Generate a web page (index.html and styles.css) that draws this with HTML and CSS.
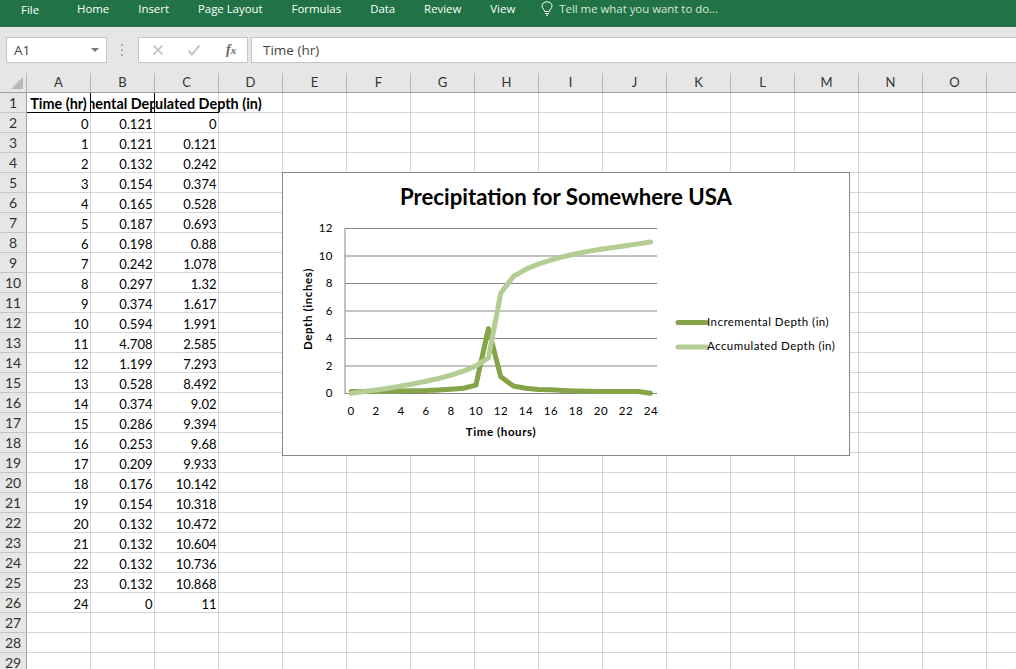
FILE: index.html
```html
<!DOCTYPE html>
<html lang="en">
<head>
    <meta charset="UTF-8">
    <title>Precipitation - Excel</title>
    <link rel="stylesheet" href="styles.css">
</head>
<body>
    <div class="ribbon">
        <span class="tab tab-file">File</span>
        <span class="tab">Home</span>
        <span class="tab">Insert</span>
        <span class="tab">Page Layout</span>
        <span class="tab">Formulas</span>
        <span class="tab">Data</span>
        <span class="tab">Review</span>
        <span class="tab">View</span>
        <span class="tell">
            <svg width="12" height="15" viewBox="0 0 12 15" fill="none" stroke="#fff" stroke-width="1">
                <path d="M3.7 10.5C3.5 8.5 1 7.5 1 4.8 1 2.5 3.2.8 6 .8s5 1.7 5 4c0 2.7-2.5 3.7-2.7 5.7z"/>
                <path d="M4 12.5h4M5 14.3h2"/>
            </svg>
            Tell me what you want to do...
        </span>
    </div>

    <div class="toolbar">
        <div class="namebox">A1<span class="caret"></span></div>
        <div class="grip"></div>
        <div class="fxbox">
            <svg width="12" height="12" viewBox="0 0 12 12" fill="none" stroke="#bdbdbd" stroke-width="1.6"><path d="M1.5 1.5l9 9M10.5 1.5l-9 9"/></svg>
            <svg width="14" height="12" viewBox="0 0 14 12" fill="none" stroke="#bdbdbd" stroke-width="1.8"><path d="M1.5 6.5l3.5 4 7.5-9"/></svg>
            <span class="fx">f<span class="fx-x">x</span></span>
        </div>
        <div class="formula">Time (hr)</div>
    </div>

    <div class="col-heads">
        <div class="corner"><span class="corner-mark"></span></div>
        <div class="ch">A</div><div class="ch">B</div><div class="ch">C</div><div class="ch">D</div>
        <div class="ch">E</div><div class="ch">F</div><div class="ch">G</div><div class="ch">H</div>
        <div class="ch">I</div><div class="ch">J</div><div class="ch">K</div><div class="ch">L</div>
        <div class="ch">M</div><div class="ch">N</div><div class="ch">O</div><div class="ch"></div>
    </div>

    <div class="sheet">
        <div class="row">
            <div class="rh">1</div>
            <div class="cell head edge"><span>Time (hr)</span></div>
            <div class="cell head edge"><span>Incremental Depth (in)</span></div>
            <div class="cell head spill"><span>Accumulated Depth (in)</span></div>
        </div>
        <div class="row"><div class="rh">2</div><div class="cell">0</div><div class="cell">0.121</div><div class="cell">0</div></div>
        <div class="row"><div class="rh">3</div><div class="cell">1</div><div class="cell">0.121</div><div class="cell">0.121</div></div>
        <div class="row"><div class="rh">4</div><div class="cell">2</div><div class="cell">0.132</div><div class="cell">0.242</div></div>
        <div class="row"><div class="rh">5</div><div class="cell">3</div><div class="cell">0.154</div><div class="cell">0.374</div></div>
        <div class="row"><div class="rh">6</div><div class="cell">4</div><div class="cell">0.165</div><div class="cell">0.528</div></div>
        <div class="row"><div class="rh">7</div><div class="cell">5</div><div class="cell">0.187</div><div class="cell">0.693</div></div>
        <div class="row"><div class="rh">8</div><div class="cell">6</div><div class="cell">0.198</div><div class="cell">0.88</div></div>
        <div class="row"><div class="rh">9</div><div class="cell">7</div><div class="cell">0.242</div><div class="cell">1.078</div></div>
        <div class="row"><div class="rh">10</div><div class="cell">8</div><div class="cell">0.297</div><div class="cell">1.32</div></div>
        <div class="row"><div class="rh">11</div><div class="cell">9</div><div class="cell">0.374</div><div class="cell">1.617</div></div>
        <div class="row"><div class="rh">12</div><div class="cell">10</div><div class="cell">0.594</div><div class="cell">1.991</div></div>
        <div class="row"><div class="rh">13</div><div class="cell">11</div><div class="cell">4.708</div><div class="cell">2.585</div></div>
        <div class="row"><div class="rh">14</div><div class="cell">12</div><div class="cell">1.199</div><div class="cell">7.293</div></div>
        <div class="row"><div class="rh">15</div><div class="cell">13</div><div class="cell">0.528</div><div class="cell">8.492</div></div>
        <div class="row"><div class="rh">16</div><div class="cell">14</div><div class="cell">0.374</div><div class="cell">9.02</div></div>
        <div class="row"><div class="rh">17</div><div class="cell">15</div><div class="cell">0.286</div><div class="cell">9.394</div></div>
        <div class="row"><div class="rh">18</div><div class="cell">16</div><div class="cell">0.253</div><div class="cell">9.68</div></div>
        <div class="row"><div class="rh">19</div><div class="cell">17</div><div class="cell">0.209</div><div class="cell">9.933</div></div>
        <div class="row"><div class="rh">20</div><div class="cell">18</div><div class="cell">0.176</div><div class="cell">10.142</div></div>
        <div class="row"><div class="rh">21</div><div class="cell">19</div><div class="cell">0.154</div><div class="cell">10.318</div></div>
        <div class="row"><div class="rh">22</div><div class="cell">20</div><div class="cell">0.132</div><div class="cell">10.472</div></div>
        <div class="row"><div class="rh">23</div><div class="cell">21</div><div class="cell">0.132</div><div class="cell">10.604</div></div>
        <div class="row"><div class="rh">24</div><div class="cell">22</div><div class="cell">0.132</div><div class="cell">10.736</div></div>
        <div class="row"><div class="rh">25</div><div class="cell">23</div><div class="cell">0.132</div><div class="cell">10.868</div></div>
        <div class="row"><div class="rh">26</div><div class="cell">24</div><div class="cell">0</div><div class="cell">11</div></div>
        <div class="row"><div class="rh">27</div></div>
        <div class="row"><div class="rh">28</div></div>
        <div class="row"><div class="rh">29</div></div>

        <!-- chart floats over the cells -->
        <div class="chart">
            <svg class="chart-svg" width="566" height="282" viewBox="0 0 566 282">
                <text class="chart-title" x="283" y="32">Precipitation for Somewhere USA</text>

                <g class="gridlines">
                    <path d="M62 55.5H374M62 83H374M62 110.5H374M62 138H374M62 165.5H374M62 193H374M62 220.5H374M62 55V221"/>
                </g>

                <g class="ytick">
                    <text x="50" y="59">12</text>
                    <text x="50" y="87">10</text>
                    <text x="50" y="114">8</text>
                    <text x="50" y="142">6</text>
                    <text x="50" y="169">4</text>
                    <text x="50" y="197">2</text>
                    <text x="50" y="224">0</text>
                </g>
                <g class="xtick">
                    <text x="68" y="242">0</text>
                    <text x="93" y="242">2</text>
                    <text x="118" y="242">4</text>
                    <text x="143" y="242">6</text>
                    <text x="168" y="242">8</text>
                    <text x="193" y="242">10</text>
                    <text x="218" y="242">12</text>
                    <text x="243" y="242">14</text>
                    <text x="268" y="242">16</text>
                    <text x="293" y="242">18</text>
                    <text x="318" y="242">20</text>
                    <text x="343" y="242">22</text>
                    <text x="368" y="242">24</text>
                </g>

                <text class="axis-title" x="218" y="263">Time (hours)</text>
                <text class="axis-title" transform="translate(29 136) rotate(-90)">Depth (inches)</text>

                <polyline class="series series-inc" points="68.2,218.6 80.7,218.6 93.1,218.5 105.6,218.2 118.1,218 130.6,217.7 143,217.6 155.5,217 168,216.2 180.4,215.2 192.9,212.1 205.4,155.6 217.8,203.8 230.3,213 242.8,215.2 255.3,216.4 267.7,216.8 280.2,217.4 292.7,217.9 305.1,218.2 317.6,218.5 330.1,218.5 342.5,218.5 355,218.5 367.5,220.3"/>
                <polyline class="series series-acc" points="68.2,220.3 80.7,218.6 93.1,217 105.6,215.2 118.1,213 130.6,210.8 143,208.2 155.5,205.5 168,202.1 180.4,198.1 192.9,192.9 205.4,184.8 217.8,120 230.3,103.5 242.8,96.3 255.3,91.1 267.7,87.2 280.2,83.7 292.7,80.8 305.1,78.4 317.6,76.3 330.1,74.5 342.5,72.7 355,70.9 367.5,69"/>

                <line class="series series-inc" x1="395" y1="149.5" x2="423" y2="149.5"/>
                <line class="series series-acc" x1="395" y1="174" x2="423" y2="174"/>
                <text class="legend" x="424" y="153">Incremental Depth (in)</text>
                <text class="legend" x="424" y="177">Accumulated Depth (in)</text>
            </svg>
        </div>
    </div>
</body>
</html>
```

FILE: styles.css
```css
* { box-sizing: border-box; }
html, body { margin: 0; height: 669px; overflow: hidden; }
body { font-family: "Lato", "Liberation Sans", sans-serif; font-size: 13px; background: #fff; color: #000; }

.ribbon { display: flex; height: 27px; padding: 0 0 11px 21px; gap: 29px; align-items: center; background: #217346; color: #fff; font-family: "Open Sans", sans-serif; font-size: 11.4px; }
.tab-file { margin-right: 9px; padding-top: 2px; }
.tell { display: flex; align-items: center; gap: 6px; margin-left: -3px; color: #d8e6dd; }

.toolbar { display: flex; height: 46px; padding: 10px 0 0 6px; background: #e6e6e6; font-family: "Open Sans", sans-serif; font-size: 13.5px; color: #444; }
.namebox, .fxbox, .formula { height: 26px; background: #fff; border: 1px solid #c6c6c6; }
.namebox { position: relative; width: 101px; padding: 3px 0 0 7px; }
.caret { position: absolute; right: 7px; top: 10px; border: 4px solid transparent; border-top: 4px solid #777; }
.grip { width: 2px; height: 12px; margin: 7px 15px 0 14px; background: repeating-linear-gradient(#b0b0b0 0 2px, transparent 2px 5px); }
.fxbox { display: flex; align-items: center; width: 110px; padding-left: 13px; gap: 23px; margin-right: 3px; }
.fx { font-family: "Liberation Serif", serif; font-style: italic; font-weight: bold; font-size: 14px; color: #666; margin-left: 2px; }
.fx-x { font-size: 11px; }
.formula { flex: 1; padding: 3px 0 0 11px; border-right: 0; }

.col-heads { display: flex; height: 20px; background: #e6e6e6; border-bottom: 1px solid #9f9f9f; }
.corner { position: relative; width: 27px; flex: none; border-right: 1px solid #b4b4b4; }
.corner-mark { position: absolute; right: 3px; bottom: 3px; border-style: solid; border-width: 0 0 12px 12px; border-color: transparent transparent #b9b9b9 transparent; }
.ch { width: 64px; flex: none; text-align: center; line-height: 19px; color: #333; border-right: 1px solid #b4b4b4; }

.sheet { position: relative; }
.row { display: flex; height: 20px; border-bottom: 1px solid #d4d4d4; background-image: linear-gradient(90deg, transparent 63px, #d4d4d4 63px); background-size: 64px 100%; background-position: 27px 0; }
.rh { width: 27px; flex: none; height: 20px; text-align: center; line-height: 20px; font-size: 14px; background: #e6e6e6; color: #333; border-right: 1px solid #9f9f9f; border-bottom: 1px solid #c4c4c4; }
.cell { width: 64px; flex: none; height: 19px; padding-right: 1.5px; text-align: right; line-height: 22px; background: #fff; border-right: 1px solid #d4d4d4; }
.head { display: flex; justify-content: center; padding: 0; font-size: 14.4px; font-weight: bold; white-space: nowrap; box-shadow: 0 1px 0 #000; }
.head span { flex: none; }
.edge { overflow: hidden; border-right-color: #000; }
.spill { clip-path: inset(0 -100px -1px 0); }

.chart { position: absolute; left: 282px; top: 79px; width: 568px; height: 284px; background: #fff; border: 1px solid #868686; }
.chart-svg { display: block; }
.chart-svg text { font-family: "Lato", "Liberation Sans", sans-serif; fill: #000; }
.chart-svg .chart-title { font-size: 22.2px; font-weight: bold; text-anchor: middle; }
.gridlines path { fill: none; stroke: #868686; stroke-width: 1; }
.chart-svg .ytick text { font-size: 11.5px; letter-spacing: 0.5px; text-anchor: end; }
.chart-svg .xtick text { font-size: 11.5px; letter-spacing: 0.5px; text-anchor: middle; }
.chart-svg .axis-title { font-size: 11.5px; letter-spacing: 0.6px; font-weight: bold; text-anchor: middle; }
.chart-svg .legend { font-size: 11.5px; letter-spacing: 0.45px; }
.series { fill: none; stroke-width: 5; stroke-linecap: round; stroke-linejoin: round; }
.series-inc { stroke: #85a447; }
.series-acc { stroke: #b4cd94; }
```
